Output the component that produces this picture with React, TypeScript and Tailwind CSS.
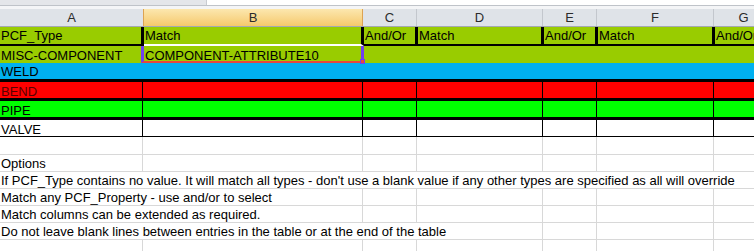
const font = { fontFamily: '"Liberation Sans", Arial, sans-serif' };

// column widths for grid lines at 142, 362, 416, 542, 596, 713
const thin = ['w-[143px]', 'w-[220px]', 'w-[54px]', 'w-[126px]', 'w-[54px]', 'w-[117px]', 'w-[60px]'];
// thick-bordered header row, borders centred on the grid lines
const thick = ['w-[144px]', 'w-[220px]', 'w-[54px]', 'w-[126px]', 'w-[54px]', 'w-[117px]', 'w-[60px]'];
const letters = ['A', 'B', 'C', 'D', 'E', 'F', 'G'];
const heads = ['PCF_Type', 'Match', 'And/Or', 'Match', 'And/Or', 'Match', 'And/Or'];

const notes: { text: string; covers: number }[] = [
  { text: 'Options', covers: 0 },
  { text: "If PCF_Type contains no value. It will match all types - don't use a blank value if any other types are specified as all will override", covers: 6 },
  { text: 'Match any PCF_Property - use and/or to select', covers: 1 },
  { text: 'Match columns can be extended as required.', covers: 1 },
  { text: 'Do not leave blank lines between entries in the table or at the end of the table', covers: 3 },
];

function ColumnHeader() {
  return (
    <div className="flex h-[18px] bg-[#dfe3e8] border-b border-[#a4a9b0] text-[13px] leading-[16px] text-[#2b2b2b]">
      {letters.map((l, i) => (
        <div
          key={l}
          className={
            thin[i] +
            ' shrink-0 text-center pt-[1px] ' +
            (i === 1
              ? 'bg-gradient-to-b from-[#fce7ae] to-[#f5c96b] border-x border-[#dda352]'
              : i === 0
              ? ''
              : 'border-r border-[#c3c7cd]')
          }
        >
          {l}
        </div>
      ))}
    </div>
  );
}

function ThinRow({ bg, label, text }: { bg: string; label: string; text: string }) {
  return (
    <div className={'flex h-[19px] border-t-[3px] border-black ' + bg}>
      {thin.map((w, i) => (
        <div
          key={i}
          className={w + ' shrink-0 pt-[2px] pl-[1px] leading-[16px] whitespace-nowrap ' + (i < 6 ? 'border-r border-black ' : '') + (i === 0 ? text : '')}
        >
          {i === 0 ? label : ''}
        </div>
      ))}
    </div>
  );
}

function GridRow({ text, covers, h }: { text?: string; covers: number; h: string }) {
  return (
    <div className={'flex border-b border-[#d8d8d8] ' + h}>
      {thin.map((w, i) => (
        <div
          key={i}
          className={w + ' shrink-0 pt-[1px] pl-[1px] leading-[16px] whitespace-nowrap ' + (i >= covers && i < 6 ? 'border-r border-[#d8d8d8]' : '')}
        >
          {i === 0 ? text : ''}
        </div>
      ))}
    </div>
  );
}

export default function App() {
  return (
    <div className="w-[754px] h-[251px] overflow-hidden bg-white text-[13px] text-black" style={font}>
      {/* formula bar edge */}
      <div className="flex h-[6px] border-b border-[#bfc3c9]">
        <div className="w-[207px] bg-[#e4e6ea] border-r border-[#c9ccd1]" />
        <div className="flex-1 bg-white" />
      </div>
      <div className="h-[3px] bg-[#f4f5f7]" />

      <ColumnHeader />

      {/* table header row */}
      <div className="flex h-[19px] bg-[#99cc00]">
        {thick.map((w, i) => (
          <div
            key={i}
            className={
              w +
              ' shrink-0 pt-[1px] pl-[1px] leading-[16px] whitespace-nowrap border-b-2 ' +
              (i === 1 ? 'border-b-white ' : 'border-b-black ') +
              (i < 6 ? 'border-r-[3px] border-r-black' : '')
            }
          >
            {heads[i]}
          </div>
        ))}
      </div>

      {/* MISC-COMPONENT row with active cell */}
      <div className="flex h-[17px] bg-[#99cc00]">
        <div className="w-[141px] shrink-0 pt-[2px] pl-[1px] leading-[15px] whitespace-nowrap">MISC-COMPONENT</div>
        <div className="relative w-[223px] shrink-0 border-x-[3px] border-b-2 border-x-[#7040f0] border-b-[#e5483c] pl-[1px] pt-[2px] leading-[15px] whitespace-nowrap">
          COMPONENT-ATTRIBUTE10
          <div className="absolute -right-[4px] -bottom-[3px] w-[5px] h-[5px] bg-[#e5483c] border border-[#7040f0]" />
        </div>
        <div className="flex-1" />
      </div>

      {/* WELD */}
      <div className="h-[16px] bg-[#00b0f0] pt-[1px] pl-[1px] leading-[16px]">WELD</div>

      <ThinRow bg="bg-[#ff0000]" label="BEND" text="text-[#5a0000]" />
      <ThinRow bg="bg-[#00ff00]" label="PIPE" text="" />
      <div className="border-b border-black">
        <ThinRow bg="bg-white" label="VALVE" text="" />
      </div>

      <GridRow covers={0} h="h-[18px]" />
      {notes.map((n) => (
        <GridRow key={n.text} text={n.text} covers={n.covers} h="h-[17px]" />
      ))}
      <GridRow covers={0} h="h-[17px]" />
    </div>
  );
}
